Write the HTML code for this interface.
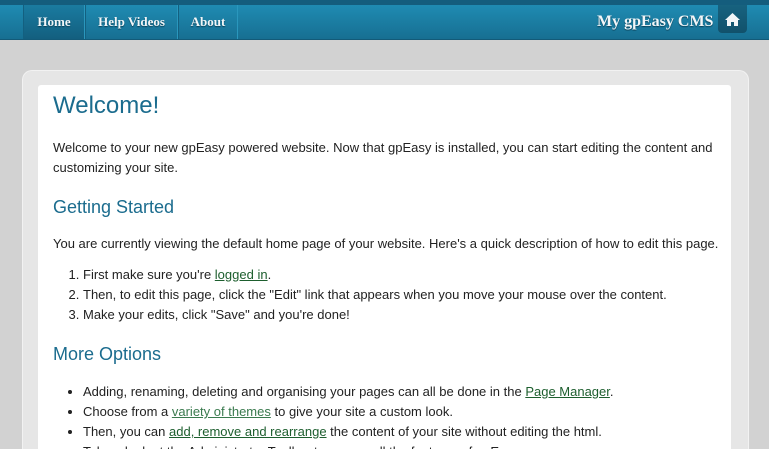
<!DOCTYPE html>
<html style="overflow:hidden;height:449px"><head><style>
body{margin:0;width:769px;height:449px;overflow:hidden;background:#d2d2d2;font-family:"Liberation Sans",sans-serif;position:relative;}
#top{position:absolute;left:0;top:0;width:769px;height:5px;background:#145d7d;}
#nav{position:absolute;left:0;top:5px;width:769px;height:34px;background:linear-gradient(#1f8bb2,#176f92);border-bottom:1px solid #135a78;}
.it{position:absolute;top:0;height:34px;line-height:34px;color:#f2f6f8;font-family:"Liberation Serif",serif;font-weight:bold;font-size:13px;text-align:center;border-left:1px solid #136080;border-right:1px solid #2a97bd;box-sizing:border-box;text-shadow:0 1px 1px #0b3f55;}
#brand{position:absolute;left:597px;top:7px;height:30px;line-height:30px;color:#f2f6f8;font-family:"Liberation Serif",serif;font-weight:bold;font-size:16px;text-shadow:0 1px 1px #0b3f55;}
#home{position:absolute;left:718px;top:5px;width:29px;height:28px;background:linear-gradient(#17627f,#11516b);border-radius:0 0 4px 4px;}
#outer{position:absolute;left:22px;top:70px;width:725px;height:378px;background:#e6e6e6;border-radius:10px 10px 0 0;border:1px solid #f2f2f2;border-bottom:0;}
#inner{position:absolute;left:38px;top:85px;width:693px;height:364px;background:#fff;border-radius:3px 3px 0 0;}
#c{position:absolute;left:53px;top:0;width:670px;height:449px;overflow:hidden;color:#222;font-size:13px;line-height:20px;}
h1{position:absolute;top:96px;margin:0;font-weight:normal;font-size:24px;color:#1b6c8e;}
h2{margin:0;font-weight:normal;font-size:18px;color:#1b6c8e;position:absolute;}
p,ul,ol{margin:0;position:absolute;}
ul,ol{padding-left:30px;width:640px;}
a{color:#1d5e2e;text-decoration:underline;}
</style></head><body>
<div id="top"></div>
<div id="nav">
<div class="it" style="left:23px;width:62px;background:linear-gradient(#1a7ba0,#135f7f);">Home</div>
<div class="it" style="left:85px;width:93px;">Help Videos</div>
<div class="it" style="left:178px;width:60px;">About</div>
</div>
<div id="brand">My gpEasy CMS</div>
<div id="home"><svg width="29" height="28" viewBox="0 0 29 28"><path d="M14.5 8 L7 15 L9 15 L9 21 L13 21 L13 17 L16 17 L16 21 L20 21 L20 15 L22 15 Z" fill="#f2f6f8"/></svg></div>
<div id="outer"></div>
<div id="inner"></div>
<div id="c">
<h1>Welcome!</h1>
<p style="top:138px">Welcome to your new gpEasy powered website. Now that gpEasy is installed, you can start editing the content and customizing your site.</p>
<h2 style="top:197px">Getting Started</h2>
<p style="top:234px">You are currently viewing the default home page of your website. Here's a quick description of how to edit this page.</p>
<ol style="top:265px">
<li>First make sure you're <a>logged in</a>.</li>
<li>Then, to edit this page, click the "Edit" link that appears when you move your mouse over the content.</li>
<li>Make your edits, click "Save" and you're done!</li>
</ol>
<h2 style="top:344px">More Options</h2>
<ul style="top:382px">
<li>Adding, renaming, deleting and organising your pages can all be done in the <a>Page Manager</a>.</li>
<li>Choose from a <a style="color:#3a7a4e">variety of themes</a> to give your site a custom look.</li>
<li>Then, you can <a>add, remove and rearrange</a> the content of your site without editing the html.</li>
<li>Take a look at the Administrator Toolbar to access all the features of gpEasy.</li>
</ul>
</div>
</body></html>
